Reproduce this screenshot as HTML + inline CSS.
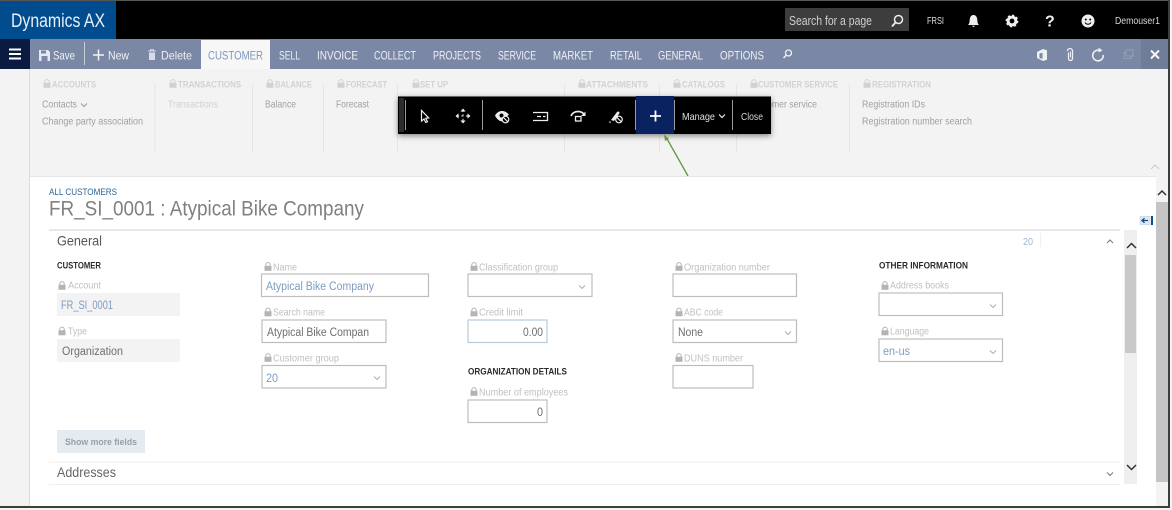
<!DOCTYPE html>
<html><head><meta charset="utf-8"><style>
html,body{margin:0;padding:0;background:#fff;width:1172px;height:510px;overflow:hidden}
svg{display:block;filter:blur(.3px)}
text{font-family:"Liberation Sans",sans-serif}
.nav{font-size:12px;fill:#eef0f4;transform:translateY(-.5px)}
.rh{font-size:9px;font-weight:bold;fill:#d2d2d2;transform:translateY(-.7px)}
.ri{font-size:10px;fill:#a0a0a0;transform:translateY(-.4px)}
.lb{font-size:10px;fill:#c0c0c0;transform:translateY(-.7px)}
.sec{font-size:9px;font-weight:bold;fill:#2a2a2a;transform:translateY(-.7px)}
.val{font-size:11.5px;fill:#7c9cc0}
.dk{font-size:11.5px;fill:#6e6e6e}
.box{fill:#fff;stroke:#bdbdbd;stroke-width:1.2}
.chev{fill:none;stroke:#aaa;stroke-width:.9}
.sep{stroke:#e6e6e6;stroke-width:1}
</style></head><body>
<svg width="1172" height="510" viewBox="0 0 1172 510" xmlns="http://www.w3.org/2000/svg">
<defs>
<symbol id="lk" viewBox="0 0 8 9"><path d="M1.8 4V2.800a2.200 2.200 0 0 1 4.400 0V4" fill="none" stroke="currentColor" stroke-width="1"/><rect x=".5" y="3.800" width="7" height="5" fill="currentColor"/></symbol>
</defs>
<rect width="1172" height="510" fill="#fff"/>
<!-- top bar -->
<rect width="1172" height="39" fill="#000"/>
<rect width="1172" height="1" fill="#555"/>
<rect y="1" width="116" height="38" fill="#014c8f"/>
<text x="11" y="27" font-size="19" fill="#e8f0f8" textLength="94" lengthAdjust="spacingAndGlyphs">Dynamics AX</text>
<rect x="785" y="8" width="124" height="23" fill="#3d3d3d"/>
<text x="789" y="25" font-size="13" fill="#cfcfcf" textLength="83" lengthAdjust="spacingAndGlyphs">Search for a page</text>
<circle cx="898.500" cy="19.500" r="4" fill="none" stroke="#eee" stroke-width="1.500"/><path d="M895.500 22.500L892 26.500" stroke="#eee" stroke-width="1.800"/>
<text x="927" y="24" font-size="10" fill="#ddd" textLength="17" lengthAdjust="spacingAndGlyphs">FRSI</text>
<path d="M968 25c1.800-1.500 1.400-4 1.900-6.500.4-2.200 1.900-3.500 3.600-3.500s3.200 1.300 3.600 3.500c.5 2.500.1 5 1.900 6.500zM972 25.800h3l-1.500 1.500z" fill="#eee"/>
<circle cx="1012" cy="21" r="3.900" fill="none" stroke="#eee" stroke-width="3"/><circle cx="1012" cy="21" r="5.500" fill="none" stroke="#eee" stroke-width="1.800" stroke-dasharray="2.100 2.200"/>
<text x="1045" y="26.500" font-size="16" font-weight="bold" fill="#eee">?</text>
<circle cx="1088" cy="21" r="6.500" fill="#eee"/><circle cx="1085.800" cy="19.500" r="1" fill="#000"/><circle cx="1090.200" cy="19.500" r="1" fill="#000"/><path d="M1085 22.500c1.500 2.300 4.500 2.300 6 0" fill="none" stroke="#000" stroke-width="1"/>
<text x="1115" y="24" font-size="10" fill="#d8d8d8" textLength="45" lengthAdjust="spacingAndGlyphs">Demouser1</text>
<!-- nav bar -->
<rect y="39" width="1172" height="30" fill="#7a88a5"/>
<rect y="39" width="30" height="30" fill="#0b1a40"/>
<path d="M9 49.500h12M9 54h12M9 58.500h12" stroke="#fff" stroke-width="2"/>
<rect x="201" y="40" width="69" height="29" fill="#f7f7f7"/>
<path d="M39 50h9l2 2v9H39z" fill="#e6e9ef"/><rect x="41" y="50.500" width="5" height="3" fill="#7a88a5"/><rect x="41.500" y="56" width="6" height="5" fill="#7a88a5"/>
<text class="nav" x="53" y="60" textLength="22" lengthAdjust="spacingAndGlyphs">Save</text>
<rect x="84" y="42" width="1" height="23" fill="#c6ccd8"/>
<path d="M93 55h11M98.500 49.500v11" stroke="#f2f4f7" stroke-width="1.500"/>
<text class="nav" x="108" y="60" textLength="21" lengthAdjust="spacingAndGlyphs">New</text>
<path d="M148 51h8M150.500 51v-1.200h3V51" stroke="#d8dce4" fill="none"/><rect x="149" y="52.500" width="6" height="7.500" fill="#d8dce4"/>
<text class="nav" x="161" y="60" textLength="31" lengthAdjust="spacingAndGlyphs">Delete</text>
<text class="nav" x="208" y="60" textLength="55" lengthAdjust="spacingAndGlyphs" style="fill:#7f97bb">CUSTOMER</text>
<text class="nav" x="279" y="60" textLength="21" lengthAdjust="spacingAndGlyphs">SELL</text>
<text class="nav" x="317" y="60" textLength="41" lengthAdjust="spacingAndGlyphs">INVOICE</text>
<text class="nav" x="374" y="60" textLength="42" lengthAdjust="spacingAndGlyphs">COLLECT</text>
<text class="nav" x="433" y="60" textLength="48" lengthAdjust="spacingAndGlyphs">PROJECTS</text>
<text class="nav" x="498" y="60" textLength="38" lengthAdjust="spacingAndGlyphs">SERVICE</text>
<text class="nav" x="553" y="60" textLength="40" lengthAdjust="spacingAndGlyphs">MARKET</text>
<text class="nav" x="610" y="60" textLength="32" lengthAdjust="spacingAndGlyphs">RETAIL</text>
<text class="nav" x="658" y="60" textLength="45" lengthAdjust="spacingAndGlyphs">GENERAL</text>
<text class="nav" x="720" y="60" textLength="44" lengthAdjust="spacingAndGlyphs">OPTIONS</text>
<circle cx="788.500" cy="53" r="3" fill="none" stroke="#eef0f4" stroke-width="1.300"/><path d="M786.300 55.200L783.500 58" stroke="#eef0f4" stroke-width="1.500"/>
<path d="M1037 52l6-3 4 1.200v9.600l-4 1.200-6-3z" fill="#eef0f4"/><path d="M1039.500 53.500l3-.6v5.800l-3-.6z" fill="#7a88a5"/>
<path d="M1068 52.500v6a2 2 0 0 0 4 0v-7.500a2.500 2.500 0 0 0-5 0" transform="translate(0.500 0)" fill="none" stroke="#eef0f4" stroke-width="1.300"/><path d="M1070.500 51.500v6" stroke="#eef0f4"/>
<path d="M1100 50.600a5.300 5.300 0 1 0 3.300 4.400" fill="none" stroke="#eef0f4" stroke-width="1.600"/><path d="M1098.500 47.500l4 3-4 2z" fill="#eef0f4"/>
<rect x="1124" y="52.500" width="7" height="6" fill="none" stroke="#95a0b8"/><rect x="1126" y="50" width="7" height="6" fill="#7a88a5" stroke="#95a0b8"/>
<rect x="1141" y="39" width="31" height="30" fill="#707d98"/>
<path d="M1151 50.500l8 8M1159 50.500l-8 8" stroke="#f4f5f8" stroke-width="2"/>
<!-- ribbon -->
<rect y="69" width="1172" height="107" fill="#f3f3f3"/>
<rect y="69" width="30" height="441" fill="#f3f3f3"/>
<rect x="29" y="69" width="1" height="437" fill="#dcdcdc"/>
<rect x="30" y="176" width="1126" height="1" fill="#e6e6e6"/>
<g class="sep"><path d="M155 84v68M252.500 84v68M323.500 84v68M397.500 84v68M564.500 84v68M659.500 84v68M736.500 84v68M849.500 84v68"/></g>
<g color="#d2d2d2">
<use href="#lk" x="43" y="79" width="8" height="9"/><use href="#lk" x="169" y="79" width="8" height="9"/><use href="#lk" x="266" y="79" width="8" height="9"/><use href="#lk" x="337" y="79" width="8" height="9"/><use href="#lk" x="412" y="79" width="8" height="9"/><use href="#lk" x="578" y="79" width="8" height="9"/><use href="#lk" x="673" y="79" width="8" height="9"/><use href="#lk" x="750" y="79" width="8" height="9"/><use href="#lk" x="863" y="79" width="8" height="9"/>
</g>
<text class="rh" x="52" y="88" textLength="44" lengthAdjust="spacingAndGlyphs">ACCOUNTS</text>
<text class="rh" x="178" y="88" textLength="63" lengthAdjust="spacingAndGlyphs">TRANSACTIONS</text>
<text class="rh" x="275" y="88" textLength="37" lengthAdjust="spacingAndGlyphs">BALANCE</text>
<text class="rh" x="346" y="88" textLength="41" lengthAdjust="spacingAndGlyphs">FORECAST</text>
<text class="rh" x="420" y="88" textLength="28" lengthAdjust="spacingAndGlyphs">SET UP</text>
<text class="rh" x="586" y="88" textLength="62" lengthAdjust="spacingAndGlyphs">ATTACHMENTS</text>
<text class="rh" x="682" y="88" textLength="43" lengthAdjust="spacingAndGlyphs">CATALOGS</text>
<text class="rh" x="758" y="88" textLength="80" lengthAdjust="spacingAndGlyphs">CUSTOMER SERVICE</text>
<text class="rh" x="872" y="88" textLength="59" lengthAdjust="spacingAndGlyphs">REGISTRATION</text>
<text class="ri" x="42" y="108" textLength="35" lengthAdjust="spacingAndGlyphs">Contacts</text>
<path d="M81 103.500l3 3 3-3" fill="none" stroke="#999"/>
<text class="ri" x="42" y="125" textLength="101" lengthAdjust="spacingAndGlyphs">Change party association</text>
<text class="ri" x="168" y="108" textLength="50" lengthAdjust="spacingAndGlyphs" style="fill:#d2d2d2">Transactions</text>
<text class="ri" x="265" y="108" textLength="31" lengthAdjust="spacingAndGlyphs">Balance</text>
<text class="ri" x="336" y="108" textLength="33" lengthAdjust="spacingAndGlyphs">Forecast</text>
<text class="ri" x="749" y="108" textLength="68" lengthAdjust="spacingAndGlyphs">Customer service</text>
<text class="ri" x="862" y="108" textLength="63" lengthAdjust="spacingAndGlyphs">Registration IDs</text>
<text class="ri" x="862" y="125" textLength="110" lengthAdjust="spacingAndGlyphs">Registration number search</text>
<path d="M1151 169l4-4 4 4" fill="none" stroke="#c8c8c8"/>
<!-- content white -->
<rect x="30" y="177" width="1126" height="329" fill="#fff"/>
<text x="49" y="195" font-size="9.500" fill="#2b6596" textLength="68" lengthAdjust="spacingAndGlyphs">ALL CUSTOMERS</text>
<text x="49" y="215.500" font-size="21" fill="#808080" textLength="315" lengthAdjust="spacingAndGlyphs">FR_SI_0001 : Atypical Bike Company</text>
<rect x="49" y="229.500" width="1071" height="1" fill="#d2d2d2"/>
<text x="57" y="245.500" font-size="14" fill="#555" textLength="45" lengthAdjust="spacingAndGlyphs">General</text>
<text x="1023" y="245" font-size="10" fill="#9db6d0" textLength="10" lengthAdjust="spacingAndGlyphs">20</text>
<rect x="1040" y="233" width="1" height="14" fill="#f0f0f0"/>
<path d="M1107 243l3-3 3 3" fill="none" stroke="#777"/>
<!-- customer col -->
<text class="sec" x="57" y="269" textLength="44" lengthAdjust="spacingAndGlyphs">CUSTOMER</text>
<g color="#b4b4b4">
<use href="#lk" x="58" y="281" width="8" height="9"/><use href="#lk" x="58" y="326.500" width="8" height="9"/>
<use href="#lk" x="264" y="262" width="8" height="9"/><use href="#lk" x="264" y="307.500" width="8" height="9"/><use href="#lk" x="264" y="353" width="8" height="9"/>
<use href="#lk" x="470" y="262" width="8" height="9"/><use href="#lk" x="470" y="307.500" width="8" height="9"/><use href="#lk" x="470" y="387" width="8" height="9"/>
<use href="#lk" x="675" y="262" width="8" height="9"/><use href="#lk" x="675" y="307.500" width="8" height="9"/><use href="#lk" x="675" y="353" width="8" height="9"/>
<use href="#lk" x="881" y="281" width="8" height="9"/><use href="#lk" x="881" y="326.500" width="8" height="9"/>
</g>
<text class="lb" x="68" y="289" textLength="33" lengthAdjust="spacingAndGlyphs">Account</text>
<rect x="57" y="293" width="123" height="23" fill="#f3f3f3"/>
<text class="val" x="61" y="309" textLength="52" lengthAdjust="spacingAndGlyphs">FR_SI_0001</text>
<text class="lb" x="68" y="335" textLength="19" lengthAdjust="spacingAndGlyphs">Type</text>
<rect x="57" y="339" width="123" height="23" fill="#f3f3f3"/>
<text class="dk" x="62" y="355" textLength="61" lengthAdjust="spacingAndGlyphs">Organization</text>
<rect x="57" y="430" width="88" height="23" fill="#e5ecf1"/>
<text x="65" y="445" font-size="9.500" font-weight="bold" fill="#9a9fa3" textLength="72" lengthAdjust="spacingAndGlyphs">Show more fields</text>
<!-- col 2 -->
<text class="lb" x="273" y="271" textLength="24" lengthAdjust="spacingAndGlyphs">Name</text>
<rect class="box" x="261.500" y="274" width="167" height="22.500"/>
<text class="val" x="266" y="290" textLength="108" lengthAdjust="spacingAndGlyphs">Atypical Bike Company</text>
<text class="lb" x="273" y="316" textLength="52" lengthAdjust="spacingAndGlyphs">Search name</text>
<rect class="box" x="262" y="320" width="124" height="22.500"/>
<text class="dk" x="267" y="336" textLength="102" lengthAdjust="spacingAndGlyphs">Atypical Bike Compan</text>
<text class="lb" x="273" y="362" textLength="66" lengthAdjust="spacingAndGlyphs">Customer group</text>
<rect class="box" x="262" y="365.500" width="124" height="22.500"/>
<text class="val" x="266" y="382" textLength="12" lengthAdjust="spacingAndGlyphs">20</text>
<path class="chev" d="M374 376.500l3 3 3-3"/>
<!-- col 3 -->
<text class="lb" x="479" y="271" textLength="79" lengthAdjust="spacingAndGlyphs">Classification group</text>
<rect class="box" x="468" y="274" width="124" height="22.500"/>
<path class="chev" d="M579 285.500l3 3 3-3"/>
<text class="lb" x="479" y="316" textLength="44" lengthAdjust="spacingAndGlyphs">Credit limit</text>
<rect x="468" y="320" width="79" height="22.500" fill="#fff" stroke="#b5cbe0" stroke-width="1.200"/>
<text class="dk" x="523" y="336" textLength="20" lengthAdjust="spacingAndGlyphs">0.00</text>
<text class="sec" x="468" y="375" textLength="99" lengthAdjust="spacingAndGlyphs">ORGANIZATION DETAILS</text>
<text class="lb" x="479" y="396" textLength="89" lengthAdjust="spacingAndGlyphs">Number of employees</text>
<rect class="box" x="468" y="400" width="79" height="22.500"/>
<text class="dk" x="537" y="416" textLength="6" lengthAdjust="spacingAndGlyphs">0</text>
<!-- col 4 -->
<text class="lb" x="684" y="271" textLength="86" lengthAdjust="spacingAndGlyphs">Organization number</text>
<rect class="box" x="673" y="274" width="123.500" height="22.500"/>
<text class="lb" x="684" y="316" textLength="39" lengthAdjust="spacingAndGlyphs">ABC code</text>
<rect class="box" x="673" y="320" width="123.500" height="22.500"/>
<text class="dk" x="678" y="336" textLength="25" lengthAdjust="spacingAndGlyphs">None</text>
<path class="chev" d="M785 331.500l3 3 3-3"/>
<text class="lb" x="684" y="362" textLength="59" lengthAdjust="spacingAndGlyphs">DUNS number</text>
<rect class="box" x="673" y="365.500" width="80" height="22.500"/>
<!-- col 5 -->
<text class="sec" x="879" y="269" textLength="89" lengthAdjust="spacingAndGlyphs">OTHER INFORMATION</text>
<text class="lb" x="890" y="289" textLength="59" lengthAdjust="spacingAndGlyphs">Address books</text>
<rect class="box" x="879" y="293" width="123.500" height="22.500"/>
<path class="chev" d="M990 304.500l3 3 3-3"/>
<text class="lb" x="890" y="335" textLength="39" lengthAdjust="spacingAndGlyphs">Language</text>
<rect class="box" x="879" y="339" width="123.500" height="22.500"/>
<text class="val" x="883" y="355" textLength="27" lengthAdjust="spacingAndGlyphs">en-us</text>
<path class="chev" d="M990 350.500l3 3 3-3"/>
<!-- addresses -->
<rect x="49" y="461.500" width="1071" height="1" fill="#efefef"/>
<text x="57" y="477" font-size="14" fill="#666" textLength="59" lengthAdjust="spacingAndGlyphs">Addresses</text>
<rect x="49" y="484" width="1071" height="1" fill="#efefef"/>
<path d="M1107 472.500l3 3 3-3" fill="none" stroke="#777"/>
<!-- inner scrollbar -->
<rect x="1124" y="230" width="13" height="254" fill="#efefef"/>
<rect x="1125" y="255" width="11" height="98" fill="#c9c9c9"/>
<path d="M1127 248l4.500-4.500 4.500 4.500" fill="none" stroke="#333" stroke-width="1.500"/>
<path d="M1127 465l4.500 4.500 4.500-4.500" fill="none" stroke="#333" stroke-width="1.500"/>
<!-- collapse -->
<rect x="1140" y="216.500" width="10" height="8" fill="#dfe9f3" stroke="#b8cde0" stroke-width=".6"/>
<path d="M1142 220.500h6M1144.500 218.300l-2.500 2.200 2.500 2.200" fill="none" stroke="#0f4c8a" stroke-width="1.300"/>
<rect x="1151" y="216" width="2" height="9" fill="#0f4c8a"/>
<!-- page scrollbar -->
<rect x="1156" y="176" width="12" height="330" fill="#f3f3f3"/>
<rect x="1156" y="202" width="12" height="280" fill="#c5c5c5"/>
<path d="M1158 195l4-4 4 4" fill="none" stroke="#333" stroke-width="1.500"/>
<!-- floating toolbar -->
<rect x="398" y="96" width="373" height="38" fill="#000" style="filter:drop-shadow(0 2px 3px rgba(0,0,0,.45))"/>
<rect x="398" y="96" width="373" height="1" fill="#666"/>
<rect x="399" y="98" width="5" height="34" fill="#2c2c2c"/>
<g fill="#9a9a9a"><rect x="405" y="100" width="1" height="30"/><rect x="482" y="100" width="1" height="30"/><rect x="635" y="100" width="1" height="30"/><rect x="674" y="100" width="1" height="30"/><rect x="732" y="100" width="1" height="30"/></g>
<rect x="636" y="96" width="38" height="38" fill="#0a2260"/>
<path d="M650 116h11M655.500 110.500v11" stroke="#fff" stroke-width="1.800"/>
<text x="682" y="120" font-size="10.500" fill="#e0e0e0" textLength="33" lengthAdjust="spacingAndGlyphs">Manage</text>
<path d="M719 114.500l3 3 3-3" fill="none" stroke="#eee" stroke-width="1.200"/>
<text x="741" y="120" font-size="10.500" fill="#d8d8d8" textLength="22" lengthAdjust="spacingAndGlyphs">Close</text>
<!-- cursor -->
<path d="M421.500 110.500v10.500l2.500-2 1.800 3.500 1.700-.8-1.800-3.400 3-.4z" fill="#000" stroke="#eee" stroke-width="1.200"/>
<!-- move -->
<path d="M463 110v12M457 116h12" stroke="#eee" stroke-width="1" stroke-dasharray="2 2.400"/>
<path d="M463 108.500l-2.600 3h5.200zM463 123.500l-2.600-3h5.200zM455.500 116l3-2.600v5.200zM470.500 116l-3-2.600v5.200z" fill="#eee"/>
<!-- eye blocked -->
<path d="M495 115.500c2-3.300 4.600-4.500 7-4.500 2.700 0 5 1.200 7 3.800l-5 3.500-1 3.200c-3.600 0-6.200-2.300-8-6z" fill="#eee"/>
<circle cx="501.500" cy="115.500" r="2" fill="#000"/>
<circle cx="505.500" cy="119.500" r="3.300" fill="#000" stroke="#eee" stroke-width="1.200"/><path d="M503.300 117.300l4.400 4.400" stroke="#eee" stroke-width="1.100"/>
<!-- field -->
<path d="M533 112.500h14.500v8H533" fill="none" stroke="#eee" stroke-width="1.300"/>
<path d="M537 116.500h4M543 116.500h2.500" stroke="#eee" stroke-width="1.300"/>
<!-- arc -->
<path d="M571 116c1-2.800 3.700-4.500 7-4.500 2.700 0 4.800 1 6.300 3" fill="none" stroke="#eee" stroke-width="1.700"/>
<path d="M585.500 111.500v4.500h-4.500z" fill="#eee"/>
<rect x="575.500" y="116.500" width="5.500" height="4.500" fill="none" stroke="#eee" stroke-width="1.300"/>
<!-- pen blocked -->
<path d="M611 120l6-8c1-1.200 3-.2 2.400 1.400l-5.400 7.600z" fill="#eee"/><circle cx="610" cy="122" r=".8" fill="#eee"/>
<circle cx="619" cy="119.500" r="3.300" fill="#000" stroke="#eee" stroke-width="1.200"/><path d="M616.800 117.300l4.400 4.400" stroke="#eee" stroke-width="1.100"/>
<!-- green arrow -->
<path d="M688 176L666 137" stroke="#5f9a3e" stroke-width="1.300" fill="none"/>
<path d="M664 134.500l1 6.500 4-2.300z" fill="#5f9a3e"/>
<!-- frame -->
<rect x="0" y="506" width="1170" height="2" fill="#3e3e3e"/>
<rect x="1168" y="0" width="2" height="508" fill="#3e3e3e"/>
<rect x="1170" y="0" width="2" height="510" fill="#f4f4f4"/>
<rect x="0" y="508" width="1172" height="2" fill="#f4f4f4"/>
</svg>
</body></html>
